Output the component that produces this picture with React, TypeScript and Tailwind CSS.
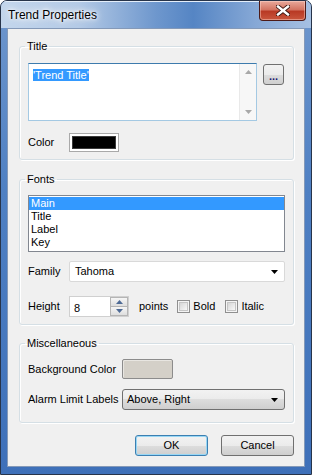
import React from "react";

function GroupBox({ label, className, children }: { label: string; className: string; children: React.ReactNode }) {
  return (
    <fieldset
      className={`ml-[11px] w-[275px] rounded-[3px] border border-[#d5dfe5] shadow-[inset_1px_1px_0_#fff,1px_1px_0_#fff] ${className}`}
    >
      <legend className="ml-[5px] px-[2px] text-[11px] leading-[13px] text-black">{label}</legend>
      <div className="px-[8px]">{children}</div>
    </fieldset>
  );
}

function DownArrow({ color = "#000" }: { color?: string }) {
  return (
    <svg width="7" height="4" viewBox="0 0 7 4">
      <polygon points="0,0 7,0 3.5,4" fill={color} />
    </svg>
  );
}

function CheckBox({ label }: { label: string }) {
  return (
    <div className="flex items-center">
      <div className="h-[13px] w-[13px] border border-[#8f8f8f] bg-[#f4f4f4] p-[1px]">
        <div className="h-full w-full border border-[#c5c5c5] bg-[linear-gradient(135deg,#d6d6d6,#f8f8f8)]" />
      </div>
      <span className="ml-[3px]">{label}</span>
    </div>
  );
}

const buttonFace =
  "bg-[linear-gradient(180deg,#f2f2f2_0%,#ebebeb_50%,#dddddd_50%,#cfcfcf_100%)]";

export default function App() {
  return (
    <div className="flex h-[475px] w-[312px] flex-col overflow-hidden rounded-t-[7px] border border-[#27344a] bg-[linear-gradient(180deg,#6f97cd_0%,#4f80c3_40%,#3e70b9_100%)] font-['Liberation_Sans',Arial,sans-serif] text-[11px] text-black">
      {/* title bar */}
      <div className="flex h-[27px] shrink-0 items-start justify-between bg-[linear-gradient(90deg,#c3d6ec_0%,#b4cae6_25%,#6e97cd_50%,#5585c4_62%,#86a8d6_82%,#a6c0e2_100%)] shadow-[inset_0_1px_0_#e4eefa]">
        <div className="pl-[7px] pt-[7px] text-[12px] leading-[15px] [text-shadow:0_0_6px_#fff,0_0_3px_#fff,0_0_10px_#fff]">
          Trend Properties
        </div>
        <div className="mr-[5px] flex h-[20px] w-[47px] items-center justify-center rounded-b-[4px] border border-t-0 border-[#4d1a17] bg-[linear-gradient(180deg,#e9a99b_0%,#d47563_45%,#b93a25_55%,#c9563d_100%)] shadow-[inset_0_0_0_1px_rgba(255,220,210,0.45)]">
          <svg width="14" height="11" viewBox="0 0 14 11">
            <path d="M2 1.5 L12 9.5 M12 1.5 L2 9.5" stroke="#3a1510" strokeWidth="4.2" strokeLinecap="square" />
            <path d="M2 1.5 L12 9.5 M12 1.5 L2 9.5" stroke="#fff" strokeWidth="2.4" strokeLinecap="square" />
          </svg>
        </div>
      </div>

      {/* client area */}
      <div className="mx-[6px] mb-[7px] flex flex-1 flex-col border border-[#8499b8] bg-[#f0f0f0]">
        <GroupBox label="Title" className="mt-[11px] h-[120px]">
          <div className="flex items-start pt-[10px]">
            <div className="flex h-[58px] w-[229px] border border-[#a4c9e3] border-t-[#3d7bad] bg-white">
              <div className="flex-1 pl-[4px] pt-[3px]">
                <span className="bg-[#3399ff] leading-[12px] text-white">'Trend Title'</span>
              </div>
              <div className="flex w-[17px] flex-col items-center justify-between border-l border-[#e9e9e9] bg-[#f7f7f7] py-[6px]">
                <svg width="7" height="4" viewBox="0 0 7 4">
                  <polygon points="0,4 7,4 3.5,0" fill="#a8a8a8" />
                </svg>
                <DownArrow color="#a8a8a8" />
              </div>
            </div>
            <div
              className={`ml-[6px] mt-[1px] flex h-[21px] w-[21px] items-end justify-center rounded-[3px] border border-[#707070] pb-[4px] text-[11px] font-bold leading-[8px] tracking-[0px] text-[#1a1a6e] ${buttonFace}`}
            >
              ...
            </div>
          </div>
          <div className="mt-[12px] flex h-[19px] items-center">
            <span className="w-[41px]">Color</span>
            <div className="h-[19px] w-[50px] border border-[#a9a9a9] bg-white p-[2px]">
              <div className="h-full w-full border border-[#3a3a3a] bg-black" />
            </div>
          </div>
        </GroupBox>

        <GroupBox label="Fonts" className="mt-[13px] h-[152px]">
          <div className="pt-[9px]">
            <div className="h-[57px] w-[257px] border border-[#828790] bg-white pt-[1px] leading-[13px]">
              <div className="bg-[#3399ff] pl-[2px] text-white">Main</div>
              <div className="pl-[2px]">Title</div>
              <div className="pl-[2px]">Label</div>
              <div className="pl-[2px]">Key</div>
            </div>
          </div>
          <div className="mt-[9px] flex items-center">
            <span className="w-[41px]">Family</span>
            <div className="flex h-[21px] w-[216px] items-center justify-between rounded-[2px] border border-[#d9d9d9] bg-white pl-[5px] pr-[6px]">
              <span>Tahoma</span>
              <DownArrow />
            </div>
          </div>
          <div className="mt-[14px] flex items-center">
            <span className="w-[41px]">Height</span>
            <div className="flex h-[21px] w-[60px] border border-[#d0d0d0] bg-white">
              <div className="flex-1 pl-[4px] pt-[3px]">8</div>
              <div className="flex w-[18px] flex-col border border-[#b5b5b5]">
                <div className="flex flex-1 items-center justify-center border-b border-[#b5b5b5] bg-[linear-gradient(180deg,#f6f6f6,#dedede)]">
                  <svg width="7" height="4" viewBox="0 0 7 4">
                    <polygon points="0,4 7,4 3.5,0" fill="#4e6a95" />
                  </svg>
                </div>
                <div className="flex flex-1 items-center justify-center bg-[linear-gradient(180deg,#f6f6f6,#dedede)]">
                  <DownArrow color="#4e6a95" />
                </div>
              </div>
            </div>
            <span className="ml-[10px]">points</span>
            <div className="ml-[9px]">
              <CheckBox label="Bold" />
            </div>
            <div className="ml-[10px]">
              <CheckBox label="Italic" />
            </div>
          </div>
        </GroupBox>

        <GroupBox label="Miscellaneous" className="mt-[12px] h-[86px]">
          <div className="flex items-center pt-[9px]">
            <span className="w-[94px]">Background Color</span>
            <div className="h-[20px] w-[51px] rounded-[2px] border border-[#8c8c8c] bg-[#d4d0c8] shadow-[inset_1px_1px_0_#e8e6e1]" />
          </div>
          <div className="mt-[10px] flex items-center">
            <span className="w-[94px]">Alarm Limit Labels</span>
            <div
              className={`flex h-[21px] w-[163px] items-center justify-between rounded-[3px] border border-[#707070] pl-[4px] pr-[6px] ${buttonFace}`}
            >
              <span>Above, Right</span>
              <DownArrow />
            </div>
          </div>
        </GroupBox>

        <div className="mt-[12px] flex w-[286px] justify-end gap-[13px]">
          <div
            className={`flex h-[21px] w-[73px] items-center justify-center rounded-[3px] border border-[#3c7fb1] shadow-[inset_0_0_0_1px_#98d7f5] ${buttonFace}`}
          >
            OK
          </div>
          <div
            className={`flex h-[21px] w-[73px] items-center justify-center rounded-[3px] border border-[#707070] ${buttonFace}`}
          >
            Cancel
          </div>
        </div>
      </div>
    </div>
  );
}
